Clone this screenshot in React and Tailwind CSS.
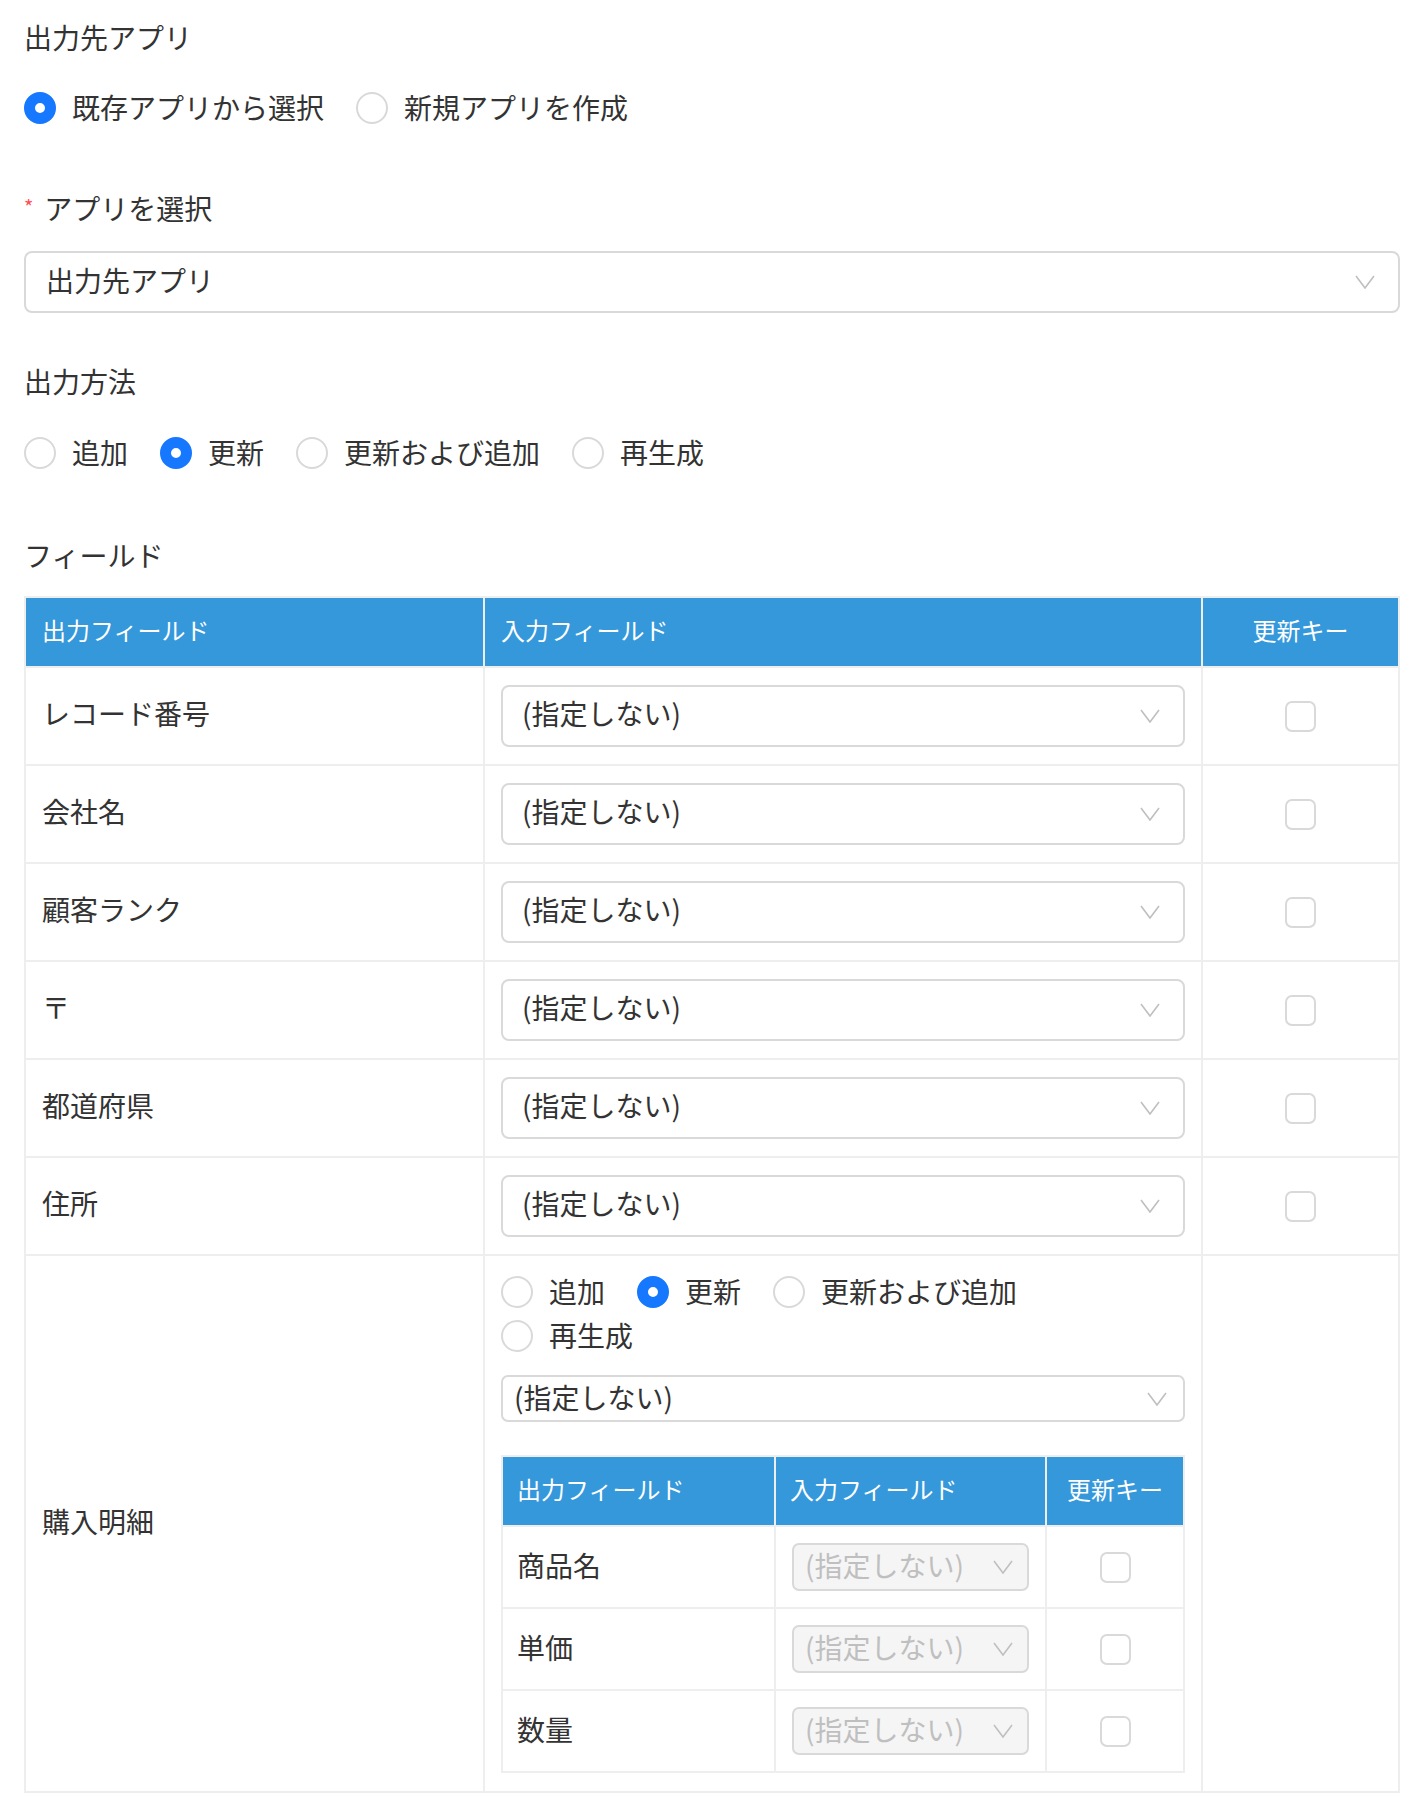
import React from "react";

const Chevron = ({ color = "#bfbfbf" }) => (
  <svg width="20" height="14" viewBox="0 0 20 14" fill="none" className="shrink-0">
    <polyline points="1,1 10,13 19,1" stroke={color} strokeWidth="1.6" strokeLinejoin="miter" />
  </svg>
);

const Radio = ({ checked, label }) => (
  <div className="flex items-center h-[44px] mr-8">
    <span
      className={
        checked
          ? "block w-8 h-8 rounded-full border-[11px] border-[#1677ff] bg-white shrink-0"
          : "block w-8 h-8 rounded-full border-2 border-[#d9d9d9] bg-white shrink-0"
      }
    />
    <span className="ml-4 text-[28px] leading-[44px] pb-[3px] whitespace-nowrap">{label}</span>
  </div>
);

const Checkbox = () => (
  <span className="block w-[31px] h-[31px] rounded-[7px] border-2 border-[#d9d9d9] bg-white" />
);

const methods = ["追加", "更新", "更新および追加", "再生成"];
const rows = ["レコード番号", "会社名", "顧客ランク", "〒", "都道府県", "住所"];
const subRows = ["商品名", "単価", "数量"];

export default function App() {
  return (
    <div className="w-[1424px] bg-white pl-6 pr-6 pt-[16px] text-[#333333] font-['Noto_Sans_CJK_JP',sans-serif]">
      <div className="h-[42px] text-[28px] leading-[42px]">出力先アプリ</div>
      <div className="mt-[28px] flex items-center">
        <Radio checked label="既存アプリから選択" />
        <Radio label="新規アプリを作成" />
      </div>

      <div className="mt-[58px] h-[42px] flex items-start">
        <span className="mt-[9px] text-[20px] leading-[20px] text-[#ff4d4f] mr-[11px]">*</span>
        <span className="text-[28px] leading-[40px]">アプリを選択</span>
      </div>
      <div className="mt-[21px] h-[62px] rounded-[8px] border-2 border-[#d9d9d9] flex items-center justify-between pl-[20px] pr-[23px]">
        <span className="text-[28px] leading-[40px] pb-[4px]">出力先アプリ</span>
        <Chevron />
      </div>

      <div className="mt-[48px] h-[42px] text-[28px] leading-[40px]">出力方法</div>
      <div className="mt-[28px] flex items-center">
        {methods.map((m) => (
          <Radio key={m} checked={m === "更新"} label={m} />
        ))}
      </div>

      <div className="mt-[59px] h-[42px] text-[28px] leading-[42px]">フィールド</div>

      <div className="mt-[20px] border-2 border-[#eeeeee]">
        <div className="grid grid-cols-[459px_718px_1fr] h-[68px] bg-[#3598db] text-white text-[24px]">
          <div className="border-r-2 border-[#eeeeee] flex items-center pl-4 pb-[4px]">出力フィールド</div>
          <div className="border-r-2 border-[#eeeeee] flex items-center pl-4 pb-[4px]">入力フィールド</div>
          <div className="flex items-center justify-center pb-[4px]">更新キー</div>
        </div>

        {rows.map((r) => (
          <div key={r} className="grid grid-cols-[459px_718px_1fr] h-[98px] border-t-2 border-[#eeeeee]">
            <div className="border-r-2 border-[#eeeeee] flex items-center pl-4 pb-[6px] text-[28px]">{r}</div>
            <div className="border-r-2 border-[#eeeeee] flex items-center px-4">
              <div className="w-full h-[62px] rounded-[8px] border-2 border-[#d9d9d9] flex items-center justify-between pl-[19px] pr-[23px]">
                <span className="text-[28px] leading-[40px] pb-[6px]">(指定しない)</span>
                <Chevron />
              </div>
            </div>
            <div className="flex items-center justify-center">
              <Checkbox />
            </div>
          </div>
        ))}

        <div className="grid grid-cols-[459px_718px_1fr] border-t-2 border-[#eeeeee]">
          <div className="border-r-2 border-[#eeeeee] flex items-center pl-4 pb-[6px] text-[28px]">購入明細</div>
          <div className="border-r-2 border-[#eeeeee] px-4 pt-[14px] pb-[18px]">
            <div className="flex flex-wrap">
              {methods.map((m) => (
                <Radio key={m} checked={m === "更新"} label={m} />
              ))}
            </div>
            <div className="mt-[17px] h-[47px] rounded-[7px] border-2 border-[#d9d9d9] flex items-center justify-between pl-[11px] pr-[16px]">
              <span className="text-[28px] leading-[40px] pb-[4px]">(指定しない)</span>
              <Chevron />
            </div>

            <div className="mt-[33px] border-2 border-[#eeeeee]">
              <div className="grid grid-cols-[273px_271px_1fr] h-[68px] bg-[#3598db] text-white text-[24px]">
                <div className="border-r-2 border-[#eeeeee] flex items-center pl-[14px] pb-[4px]">出力フィールド</div>
                <div className="border-r-2 border-[#eeeeee] flex items-center pl-[14px] pb-[4px]">入力フィールド</div>
                <div className="flex items-center justify-center pb-[4px]">更新キー</div>
              </div>
              {subRows.map((r) => (
                <div key={r} className="grid grid-cols-[273px_271px_1fr] h-[82px] border-t-2 border-[#eeeeee]">
                  <div className="border-r-2 border-[#eeeeee] flex items-center pl-[14px] pb-[5px] text-[28px]">{r}</div>
                  <div className="border-r-2 border-[#eeeeee] flex items-center px-4">
                    <div className="w-full h-[48px] rounded-[7px] border-2 border-[#d9d9d9] bg-[#f5f5f5] flex items-center justify-between pl-[11px] pr-[14px]">
                      <span className="text-[28px] leading-[40px] pb-[4px] text-[#bfbfbf]">(指定しない)</span>
                      <Chevron />
                    </div>
                  </div>
                  <div className="flex items-center justify-center">
                    <Checkbox />
                  </div>
                </div>
              ))}
            </div>
          </div>
          <div />
        </div>
      </div>
    </div>
  );
}
